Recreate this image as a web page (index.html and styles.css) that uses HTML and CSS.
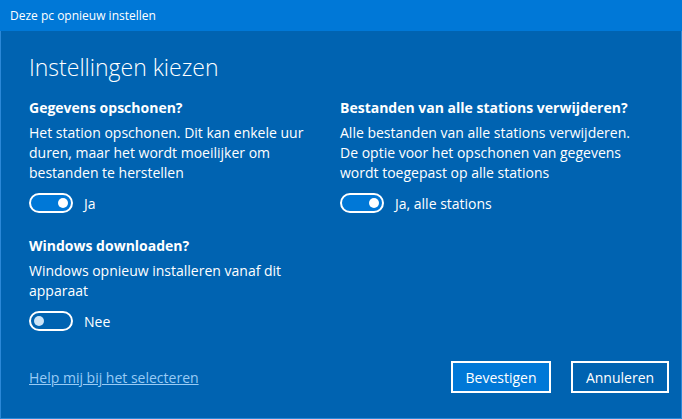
FILE: index.html
```html
<!DOCTYPE html>
<html lang="nl">
<head>
<meta charset="utf-8">
<title>Deze pc opnieuw instellen</title>
<link rel="stylesheet" href="styles.css">
</head>
<body>
<div class="window">
  <div class="titlebar">Deze pc opnieuw instellen</div>
  <div class="content">
    <h1 class="title">Instellingen kiezen</h1>
    <div class="options">
      <section class="option">
        <h2 class="option-head">Gegevens opschonen?</h2>
        <p class="option-text">Het station opschonen. Dit kan enkele uur duren, maar het wordt moeilijker om bestanden te herstellen</p>
        <div class="toggle-row">
          <span class="toggle on"><span class="knob"></span></span>
          <span class="toggle-label">Ja</span>
        </div>
      </section>
      <section class="option">
        <h2 class="option-head">Bestanden van alle stations verwijderen?</h2>
        <p class="option-text">Alle bestanden van alle stations verwijderen. De optie voor het opschonen van gegevens wordt toegepast op alle stations</p>
        <div class="toggle-row">
          <span class="toggle on"><span class="knob"></span></span>
          <span class="toggle-label">Ja, alle stations</span>
        </div>
      </section>
      <section class="option">
        <h2 class="option-head">Windows downloaden?</h2>
        <p class="option-text">Windows opnieuw installeren vanaf dit apparaat</p>
        <div class="toggle-row">
          <span class="toggle off"><span class="knob"></span></span>
          <span class="toggle-label">Nee</span>
        </div>
      </section>
    </div>
    <div class="footer">
      <a class="help" href="#">Help mij bij het selecteren</a>
      <div class="buttons">
        <button class="btn primary">Bevestigen</button>
        <button class="btn">Annuleren</button>
      </div>
    </div>
  </div>
</div>
</body>
</html>
```
FILE: styles.css
```css
html, body {
  margin: 0;
  padding: 0;
}
body {
  font-family: "Open Sans", "Noto Sans", sans-serif;
  color: #ffffff;
  background: #0063b1;
}
.window {
  width: 682px;
  height: 419px;
  box-sizing: border-box;
  border: 1px solid #2b88d8;
  border-top: none;
  background: #0063b1;
  display: flex;
  flex-direction: column;
}
.titlebar {
  height: 31px;
  margin: 0 -1px;
  background: #0078d7;
  font-size: 12px;
  line-height: 31px;
  padding-left: 10px;
  flex: none;
}
.content {
  flex: 1;
  padding: 0 12px 0 28px;
  display: flex;
  flex-direction: column;
}
.title {
  margin: 20px 0 0 0;
  font-weight: 300;
  font-size: 23px;
  line-height: 32px;
}
.options {
  display: grid;
  grid-template-columns: 311px 1fr;
  column-gap: 0;
  row-gap: 23px;
  margin-top: 15px;
}
.option-head {
  margin: 0;
  font-size: 14px;
  font-weight: 700;
  line-height: 20px;
}
.option-text {
  margin: 5px 0 0 0;
  font-size: 14px;
  line-height: 20px;
  max-width: 290px;
}
.toggle-row {
  display: flex;
  align-items: center;
  margin-top: 10px;
  height: 20px;
}
.toggle {
  box-sizing: border-box;
  width: 44px;
  height: 20px;
  border: 2px solid #ffffff;
  border-radius: 10px;
  display: flex;
  align-items: center;
  padding: 0 3px;
}
.toggle.on {
  background: #0078d7;
  justify-content: flex-end;
}
.toggle.off {
  background: transparent;
  justify-content: flex-start;
}
.knob {
  width: 10px;
  height: 10px;
  border-radius: 50%;
  background: #ffffff;
}
.toggle.off .knob {
  background: #cce4f7;
}
.toggle-label {
  margin-left: 11px;
  font-size: 14px;
}
.footer {
  margin-top: auto;
  margin-bottom: 25px;
  display: flex;
  align-items: center;
  justify-content: space-between;
}
.help {
  color: #99cbf5;
  font-size: 14px;
  text-decoration: underline;
}
.buttons {
  display: flex;
  gap: 20px;
}
.btn {
  box-sizing: border-box;
  width: 100px;
  height: 32px;
  border: 2px solid #ffffff;
  background: transparent;
  color: #ffffff;
  font-family: "Open Sans", "Noto Sans", sans-serif;
  font-size: 14px;
  padding: 0;
}
.btn:nth-child(2) {
  width: 98px;
}
.btn.primary {
  background: #0078d7;
}
```
